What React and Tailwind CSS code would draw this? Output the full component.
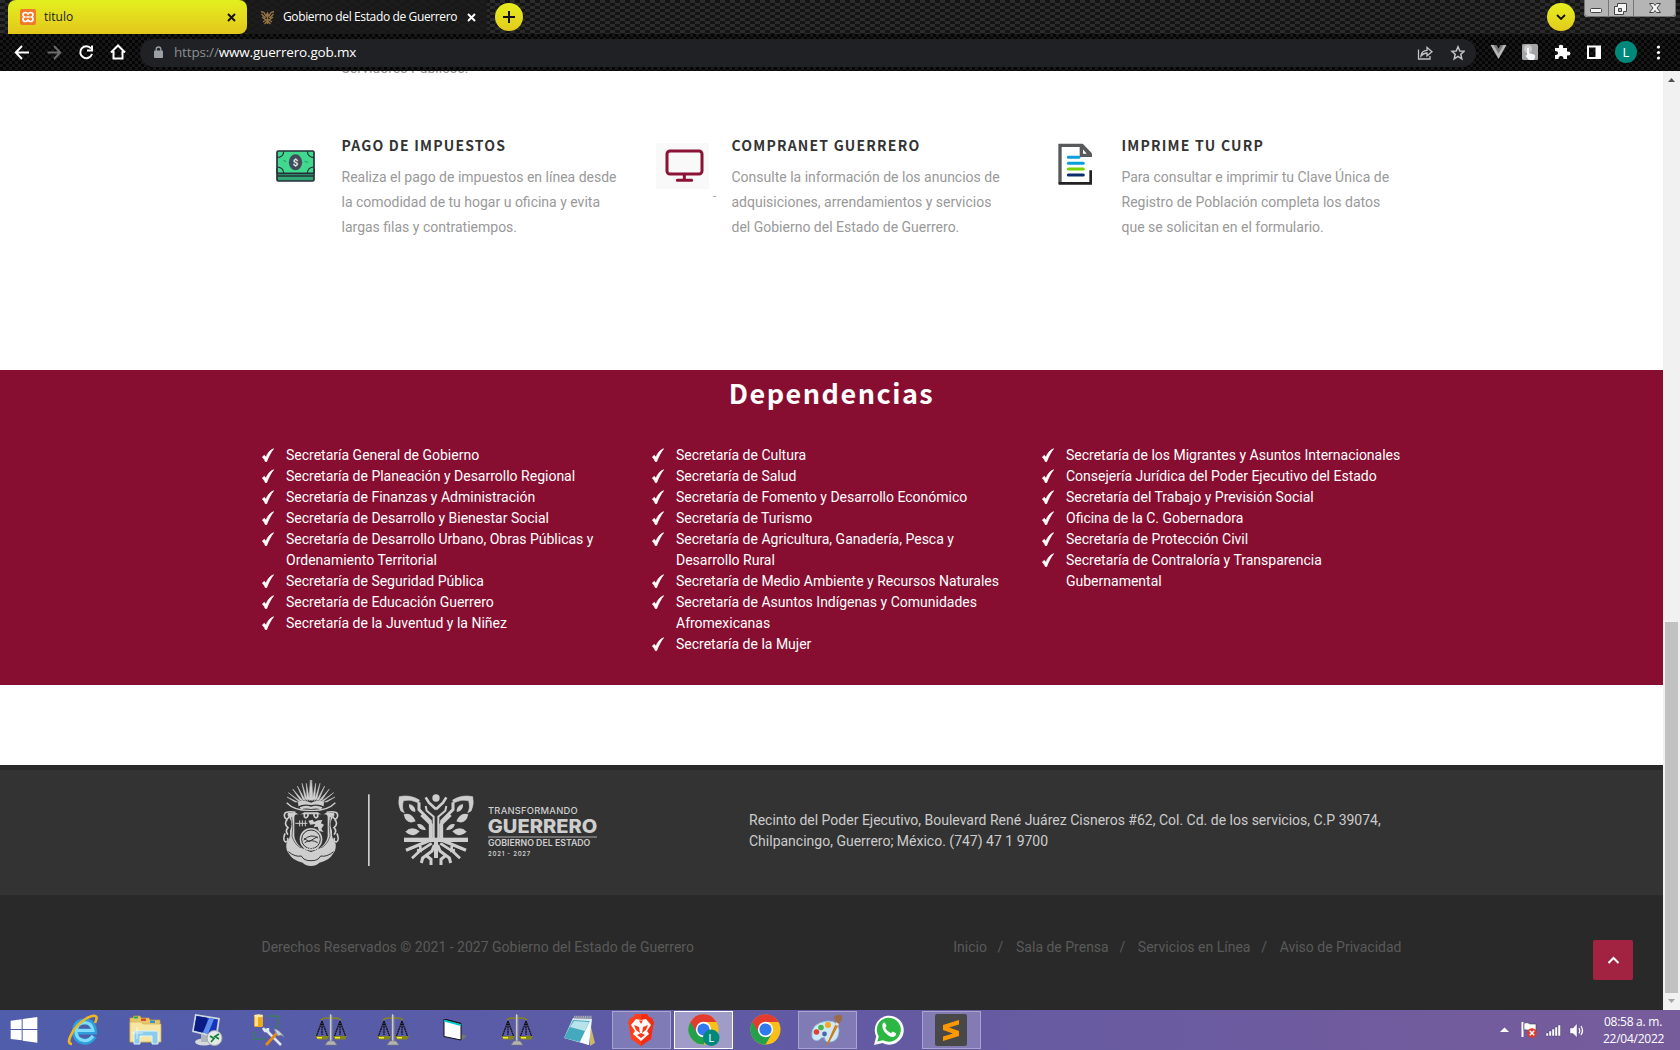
import React from "react";

const carbon =
  "bg-[#1c1c1c] bg-[repeating-conic-gradient(#141414_0_25%,#2b2b2b_0_50%)] bg-[length:10px_6px]";
const carbonFine =
  "bg-[#0c0c0c] bg-[repeating-conic-gradient(#050505_0_25%,#171717_0_50%)] bg-[length:6px_6px]";

function Close({ color }) {
  return (
    <svg className="h-[9px] w-[9px] shrink-0" viewBox="0 0 9 9">
      <path d="M1 1L8 8M8 1L1 8" stroke={color} strokeWidth="1.9" />
    </svg>
  );
}

function Butterfly() {
  return (
    <>
      <path d="M418 110Q450 103 478 120L475 128Q450 116 430 122Q424 145 433 158L423 153Q413 134 418 110Z" strokeWidth="2" stroke="currentColor" />
      <path d="M448 134Q464 136 465 154Q449 153 448 134Z" strokeWidth="3" stroke="currentColor" />
      <path d="M431 163Q455 155 467 184Q438 196 431 163Z" />
      <path d="M436 215Q456 195 479 214Q458 237 436 215Z" />
      <path d="M471 193Q487 188 498 209Q478 213 471 193Z" />
      <path d="M477 127V149L511 183V238" fill="none" stroke="currentColor" strokeWidth="9" />
      <path d="M484 165L514 194V238" fill="none" stroke="currentColor" strokeWidth="9" />
      <path d="M497 112L507 128L528 148" fill="none" stroke="currentColor" strokeWidth="8" />
      <path d="M497 138L500 152L521 170V240" fill="none" stroke="currentColor" strokeWidth="6" />
      <path d="M432 233H528V246H432Z" />
      <path d="M522 240H528V294H522Z" />
      <path d="M438 271L476 255L514 239" fill="none" stroke="currentColor" strokeWidth="10" />
      <path d="M456 295L477 275L515 250M471 270L486 273M481 258V273" fill="none" stroke="currentColor" strokeWidth="8" />
      <path d="M484 309L488 294L516 273L523 255M497 285L513 298V315" fill="none" stroke="currentColor" strokeWidth="9" />
    </>
  );
}

function CrestHalf() {
  return (
    <>
      <path d="M151 60L156 120H147ZM139 70L149 121L141 117ZM126 70L143 122L135 116ZM112 78L137 122L129 119ZM98 87L130 123L120 120ZM85 98L125 126L116 124ZM81 111L113 126L105 126Z" stroke="currentColor" strokeWidth="1.5" />
      <path d="M114 125Q133 118 153 128V135Q130 130 115 139ZM119 142Q135 134 153 140V147Q131 143 124 150Z" />
      <path d="M80 128Q104 153 153 151" fill="none" stroke="currentColor" strokeWidth="4" />
      <path d="M106 157Q90 153 76 158Q68 169 80 178Q93 169 83 163M82 178Q70 191 84 203Q74 213 84 224M75 220Q67 241 77 246Q88 244 82 234" fill="none" stroke="currentColor" strokeWidth="5" />
      <path d="M83 158H108Q119 168 133 157H153V163H112Q103 164 103 171V229Q108 262 153 276V318Q135 317 128 308Q98 302 88 283Q77 270 79 251Q92 235 90 213Q100 190 88 173Z" />
      <path d="M85 275Q106 292 124 288Q132 303 153 302" fill="none" stroke="#333" strokeWidth="3" />
      <path d="M95 171Q101 200 96 229Q105 259 131 267" fill="none" stroke="#333" strokeWidth="2" />
      <path d="M133 158V170Q139 178 144 167V161" fill="none" stroke="currentColor" strokeWidth="5" />
    </>
  );
}

function FooterLogo() {
  return (
    <svg className="-ml-[1.5px] h-[100px] w-[380px] text-[#cecece]" viewBox="0 30 1140 300" fill="currentColor">
      <CrestHalf />
      <g transform="translate(306 0) scale(-1 1)">
        <CrestHalf />
      </g>
      <circle cx="153" cy="238" r="34" />
      <circle cx="153" cy="238" r="28" fill="none" stroke="#333" strokeWidth="3" />
      <path d="M131 240Q153 219 174 234M132 235L147 245L172 230M134 248Q153 236 173 248" fill="none" stroke="#333" strokeWidth="3" />
      <path d="M106 190H142M119 181V199M127 181V199M136 181V199" stroke="currentColor" strokeWidth="3" />
      <path d="M145 182L158 179L162 186L174 181L187 180L183 190L192 194L184 207L191 216L177 213L173 200L161 202L166 192L151 194Z" />
      <path d="M123 268L184 268" stroke="currentColor" strokeWidth="6" strokeDasharray="5 3" />
      <rect x="324" y="103" width="5" height="215" />
      <circle cx="528" cy="114" r="11" />
      <Butterfly />
      <g transform="translate(1056 0) scale(-1 1)">
        <Butterfly />
      </g>
      <text x="684" y="161" fontFamily="Inter, sans-serif" fontSize="28" fontWeight="500" textLength="269">TRANSFORMANDO</text>
      <text x="683" y="219" fontFamily="Inter, sans-serif" fontSize="56" fontWeight="800" textLength="329" lengthAdjust="spacingAndGlyphs">GUERRERO</text>
      <rect x="684" y="229" width="327" height="4" fill="#8e8e8e" />
      <text x="684" y="259" fontFamily="Inter, sans-serif" fontSize="25" fontWeight="600" textLength="307" lengthAdjust="spacingAndGlyphs">GOBIERNO DEL ESTADO</text>
      <text x="684" y="289" fontFamily="Inter, sans-serif" fontSize="18" fontWeight="600" textLength="127">2021 - 2027</text>
    </svg>
  );
}

function Money() {
  return (
    <svg className="mt-[17px] ml-[14.5px] h-[32px] w-[39px]" viewBox="0 0 117 96">
      <rect x="3" y="55" width="111" height="38" rx="5" fill="#2fa673" stroke="#262f3a" strokeWidth="5" />
      <path d="M3 78H114" stroke="#262f3a" strokeWidth="5" />
      <rect x="3" y="3" width="111" height="67" rx="4" fill="#40d98e" stroke="#262f3a" strokeWidth="5" />
      <path d="M3 23Q23 22 23 4M94 4Q95 22 114 23M3 51Q22 52 23 69M114 51Q95 52 94 69" fill="none" stroke="#262f3a" strokeWidth="3.5" />
      <path d="M22 33Q27 30 29 36M86 33Q92 38 96 35" fill="none" stroke="#2fa673" strokeWidth="4" />
      <ellipse cx="58.500" cy="37" rx="20" ry="24" fill="#414b5a" />
      <text x="58.500" y="47" textAnchor="middle" fontFamily="Roboto, sans-serif" fontWeight="700" fontSize="29" fill="#eee">$</text>
    </svg>
  );
}

function Monitor() {
  return (
    <div className="mt-[10px] ml-[4.500px] w-[61px]">
      <div className="h-[46px] w-[53px] bg-[#f9f9f9]">
        <svg className="h-[46px] w-[53px]" viewBox="0 0 159 138">
          <rect x="33" y="24" width="105" height="69" rx="9" fill="none" stroke="#8a1336" strokeWidth="9" />
          <path d="M85 94V110M64 112H107" stroke="#8a1336" strokeWidth="9" strokeLinecap="round" />
        </svg>
      </div>
      <div className="mt-[7px] mr-[1px] ml-auto h-px w-[3px] bg-[#aaa]" />
    </div>
  );
}

function Doc() {
  return (
    <svg className="mt-[10px] ml-[16.500px] h-[43px] w-[35px]" viewBox="0 0 105 129">
      <path d="M6 122V7H72L98 34" fill="none" stroke="#58595b" strokeWidth="10" />
      <path d="M65 4H74L102 33V42H65ZM75 19V32H86Z" fill="#58595b" fillRule="evenodd" />
      <path d="M2 121H98V82" fill="none" stroke="#222" strokeWidth="8" />
      <g strokeWidth="9" strokeLinecap="round">
        <path d="M31 43H63M31 61H76" stroke="#0a9fdb" />
        <path d="M31 78H76" stroke="#79d400" />
        <path d="M31 96H76" stroke="#0b2d6d" />
      </g>
    </svg>
  );
}

const services = [
  {
    icon: <Money />,
    title: "PAGO DE IMPUESTOS",
    lines: ["Realiza el pago de impuestos en línea desde", "la comodidad de tu hogar u oficina y evita", "largas filas y contratiempos."],
  },
  {
    icon: <Monitor />,
    title: "COMPRANET GUERRERO",
    lines: ["Consulte la información de los anuncios de", "adquisiciones, arrendamientos y servicios", "del Gobierno del Estado de Guerrero."],
  },
  {
    icon: <Doc />,
    title: "IMPRIME TU CURP",
    lines: ["Para consultar e imprimir tu Clave Única de", "Registro de Población completa los datos", "que se solicitan en el formulario."],
  },
];

const departments = [
  [
    ["Secretaría General de Gobierno"],
    ["Secretaría de Planeación y Desarrollo Regional"],
    ["Secretaría de Finanzas y Administración"],
    ["Secretaría de Desarrollo y Bienestar Social"],
    ["Secretaría de Desarrollo Urbano, Obras Públicas y", "Ordenamiento Territorial"],
    ["Secretaría de Seguridad Pública"],
    ["Secretaría de Educación Guerrero"],
    ["Secretaría de la Juventud y la Niñez"],
  ],
  [
    ["Secretaría de Cultura"],
    ["Secretaría de Salud"],
    ["Secretaría de Fomento y Desarrollo Económico"],
    ["Secretaría de Turismo"],
    ["Secretaría de Agricultura, Ganadería, Pesca y", "Desarrollo Rural"],
    ["Secretaría de Medio Ambiente y Recursos Naturales"],
    ["Secretaría de Asuntos Indígenas y Comunidades", "Afromexicanas"],
    ["Secretaría de la Mujer"],
  ],
  [
    ["Secretaría de los Migrantes y Asuntos Internacionales"],
    ["Consejería Jurídica del Poder Ejecutivo del Estado"],
    ["Secretaría del Trabajo y Previsión Social"],
    ["Oficina de la C. Gobernadora"],
    ["Secretaría de Protección Civil"],
    ["Secretaría de Contraloría y Transparencia", "Gubernamental"],
  ],
];

function TabStrip() {
  return (
    <div className={`flex h-[34px] ${carbon}`}>
      <div className="ml-2 flex h-[34px] w-[239px] items-center rounded-t-lg rounded-br-lg bg-linear-to-b from-[#e3f01f] to-[#e3c61c] pr-[11px] pl-3 text-[#222]">
        <svg className="h-4 w-4 shrink-0" viewBox="0 0 16 16">
          <rect width="16" height="16" rx="2" fill="#f07a2c" />
          <path d="M8 5Q7 3.500 5.500 3.500Q3 3.500 3 6Q3 7.500 4.500 8Q3 8.500 3 10Q3 12.500 5.500 12.500Q7 12.500 8 11Q9 12.500 10.500 12.500Q13 12.500 13 10Q13 8.500 11.500 8Q13 7.500 13 6Q13 3.500 10.500 3.500Q9 3.500 8 5ZM6.500 8H9.500" fill="none" stroke="#fff" strokeWidth="1.700" />
        </svg>
        <span className="ml-2 flex-1 text-[12px]">titulo</span>
        <Close color="#111" />
      </div>
      <div className="flex h-[34px] w-[240px] items-center bg-[#191919]/80 pr-[11px] pl-[13px] text-white">
        <svg className="h-[15px] w-[15px] shrink-0" viewBox="0 0 15 15" fill="none" stroke="#967344" strokeWidth="1.400">
          <path d="M1 1.500L4 2.500L6 6L7.500 3L9 6L11 2.500L14 1.500M1.500 4L5.500 8M13.500 4L9.500 8M2 7L6 10H9L13 7M7.500 4V14M3 12L7.500 9L12 12M4.500 14L7.500 11L10.500 14" />
        </svg>
        <span className="ml-2 flex-1 text-[12px] tracking-[-0.37px] whitespace-nowrap">Gobierno del Estado de Guerrero</span>
        <Close color="#fff" />
      </div>
      <div className="mt-[3px] ml-2 flex h-7 w-7 items-center justify-center rounded-full bg-linear-to-b from-[#e6ee1f] to-[#e2cb1c]">
        <svg className="h-3 w-3" viewBox="0 0 12 12">
          <path d="M6 0V12M0 6H12" stroke="#111" strokeWidth="2" />
        </svg>
      </div>
      <div className="flex-1" />
      <div className="mt-[3px] mr-[9px] flex h-7 w-7 items-center justify-center rounded-full bg-linear-to-b from-[#e6ee1f] to-[#e2cb1c]">
        <svg className="h-[6px] w-[10px]" viewBox="0 0 10 6">
          <path d="M1 1L5 5L9 1" fill="none" stroke="#111" strokeWidth="1.800" />
        </svg>
      </div>
      <svg className="mr-1 h-[17px] w-[92px]" viewBox="0 0 92 17">
        <path d="M0 0H92V14Q92 17 89 17H3Q0 17 0 14Z" fill="#b5b5b5" />
        <path d="M0.500 0V13Q0.500 16.500 4 16.500H88Q91.500 16.500 91.500 13V0M24.500 0V16M49.500 0V16" fill="none" stroke="#777" />
        <g fill="#f5f5f5" stroke="#444">
          <rect x="6.500" y="8.500" width="11" height="4" rx="1" />
          <path d="M33.500 3.500H42.500V11.500H39.500V14.500H30.500V6.500H33.500ZM34.500 8.500V11.500H37.500V8.500Z" fillRule="evenodd" />
          <path d="M65.500 3.500H69.500L71 5.500L72.500 3.500H76.500L73 8L76.500 12.500H72.500L71 10.500L69.500 12.500H65.500L69 8Z" />
        </g>
      </svg>
    </div>
  );
}

function Toolbar() {
  return (
    <div className={`flex h-[37px] items-center ${carbonFine}`}>
      <svg className="h-[37px] w-[140px] shrink-0" viewBox="0 0 140 37" fill="none" stroke="#fff" strokeWidth="2">
        <path d="M29 18.500H16.500M22 12L15.800 18.500L22 25" />
        <path d="M47.500 18.500H60M54 12L60.200 18.500L54 25" stroke="#6d6d6d" />
        <path d="M91 14.500A6 6 0 1 0 92 20M92 11.500V16.500H87" />
        <path d="M111 18.500L118 11.500L125 18.500M113.500 17V24.500H122.500V17" />
      </svg>
      <div className="flex h-7 w-[1336px] items-center rounded-full bg-[#202124] pr-[11px] pl-[14px]">
        <svg className="h-[13px] w-[9px]" viewBox="0 0 9 13">
          <rect y="4.500" width="9" height="7.500" rx="1" fill="#9aa0a6" />
          <path d="M2.200 5V3.200Q2.200 1 4.500 1Q6.800 1 6.800 3.200V5" fill="none" stroke="#9aa0a6" strokeWidth="1.300" />
        </svg>
        <div className="ml-[11px] flex-1 text-[13.500px] tracking-[-0.17px] text-white">
          <span className="text-[#8b8f93]">https://</span>www.guerrero.gob.mx
        </div>
        <svg className="h-[16px] w-[48px]" viewBox="0 0 48 16" fill="none" stroke="#c0c3c7" strokeWidth="1.300">
          <path d="M1.500 4.500V14H13V11M4 11Q4.500 5.500 10 5.300V2.500L15 6.700L10 10.800V8Q6.500 8 4 11Z" />
          <path d="M41 1.800L42.800 6L47 6.300L43.800 9.200L44.800 13.800L41 11.400L37.200 13.800L38.200 9.200L35 6.300L39.200 6Z" strokeWidth="1.500" />
        </svg>
      </div>
      <svg className="h-[37px] flex-1" viewBox="1476 34 204 37">
        <path d="M1490.500 45H1495L1498.500 51.200L1502 45H1506.500L1498.500 59Z" fill="#b8b8b8" />
        <path d="M1493.500 45H1496.500L1498.500 48.500L1500.500 45H1503.500L1498.500 53.500Z" fill="#777" />
        <rect x="1522" y="44" width="16" height="16" rx="1.500" fill="#a5a5a5" />
        <circle cx="1528" cy="49" r="4" fill="#c9c9c9" />
        <path d="M1527 48Q1528 47 1529 48V53L1534 54.500Q1535.500 55 1535 57L1534 60H1529L1525.500 56L1526 55L1527 55.500Z" fill="#f5f8fa" />
        <path d="M1555 48H1559Q1558 44.700 1561 44.700Q1563.800 44.700 1563 48H1567V51.500Q1570.500 51 1570.500 53.500Q1570.500 56 1567 55.500V59H1563.500Q1563.500 56 1561 56Q1558.500 56 1558.500 59H1555V55Q1558 55 1558 53Q1558 51 1555 51Z" fill="#fff" />
        <rect x="1588" y="46.500" width="12" height="11.500" fill="none" stroke="#fff" strokeWidth="2" />
        <rect x="1595.500" y="46" width="5" height="12" fill="#fff" />
        <circle cx="1626" cy="52" r="11" fill="#00897b" />
        <text x="1626" y="56.500" textAnchor="middle" fontFamily="Roboto, sans-serif" fontSize="12" fill="#fff">L</text>
        <g fill="#fff">
          <circle cx="1658.500" cy="47" r="1.600" />
          <circle cx="1658.500" cy="52.500" r="1.600" />
          <circle cx="1658.500" cy="58" r="1.600" />
        </g>
      </svg>
    </div>
  );
}

function Scrollbar() {
  return (
    <div className="flex w-[17px] flex-col items-center bg-[#f1f1f1]">
      <svg className="h-[17px] w-[17px]" viewBox="0 0 17 17">
        <path d="M5 11L8.500 7L12 11Z" fill="#505050" />
      </svg>
      <div className="mt-[534px] h-[371px] w-[13px] bg-[#c1c1c1]" />
      <svg className="h-[17px] w-[17px]" viewBox="0 0 17 17">
        <path d="M5 6L8.500 10L12 6Z" fill="#a3a3a3" />
      </svg>
    </div>
  );
}

function Page() {
  return (
    <div className="flex h-[939px]">
      <main className="relative w-[1663px] overflow-hidden bg-white font-[Roboto,sans-serif] text-[14px]">
        <section className="flow-root h-[299px]">
          <div className="mx-auto flow-root w-[1140px]">
            <p className="-mt-[15px] ml-20 block h-[25px] leading-[25px] text-[#999]">Servidores Públicos.</p>
            <div className="mt-[51px] grid w-[1170px] grid-cols-3">
              {services.map((s) => (
                <article key={s.title} className="flex pt-[1px]">
                  <div className="w-20 shrink-0">{s.icon}</div>
                  <div className="whitespace-nowrap">
                    <h3 className="h-[32px] font-['Noto_Sans_CJK_SC',sans-serif] text-[14px] leading-[24px] font-bold tracking-[1.200px] text-[#333]">{s.title}</h3>
                    <p className="leading-[25px] text-[#999]">
                      {s.lines.map((l) => (
                        <span key={l} className="block">{l}</span>
                      ))}
                    </p>
                  </div>
                </article>
              ))}
            </div>
          </div>
        </section>
        <section className="h-[315px] bg-[#880e31] text-white">
          <h2 className="pt-[3px] text-center font-['Noto_Sans_CJK_SC',sans-serif] text-[27px] leading-[40px] font-bold tracking-[1.500px]">Dependencias</h2>
          <div className="mx-auto mt-[32px] w-[1140px]">
            <div className="grid w-[1170px] grid-cols-3">
              {departments.map((col, i) => (
                <ul key={i} className="leading-[21px] whitespace-nowrap">
                  {col.map((item) => (
                    <li key={item[0]} className="flex">
                      <svg className="mt-[3px] mr-[12px] ml-[0.5px] h-[14px] w-[12px] shrink-0" viewBox="38 55 36 42">
                        <path d="M39 82L45 77L50 83C54 72 61 61 73 57C64 68 57 82 52 96H48C46 90 43 86 39 82Z" fill="#fff" stroke="#fff" strokeWidth="2" />
                      </svg>
                      <div>
                        {item.map((l) => (
                          <span key={l} className="block">{l}</span>
                        ))}
                      </div>
                    </li>
                  ))}
                </ul>
              ))}
            </div>
          </div>
        </section>
        <div className="h-20" />
        <footer className="border-t-[5px] border-[#282828] bg-[#333]">
          <div className="mx-auto flex h-[125px] w-[1140px]">
            <FooterLogo />
            <p className="mt-[40px] ml-[109px] leading-[21px] whitespace-nowrap text-[#ccc]">
              Recinto del Poder Ejecutivo, Boulevard René Juárez Cisneros #62, Col. Cd. de los servicios, C.P 39074,
              <br />
              Chilpancingo, Guerrero; México. (747) 47 1 9700
            </p>
          </div>
          <div className="h-[115px] bg-[#292929] text-[#5a5a5a]">
            <div className="mx-auto flex h-[104px] w-[1140px] items-center justify-between">
              <span>Derechos Reservados © 2021 - 2027 Gobierno del Estado de Guerrero</span>
              <nav className="flex">
                <span>Inicio</span>
                <span className="mx-[10.700px]">/</span>
                <span className="ml-[2px]">Sala de Prensa</span>
                <span className="mx-[10.700px]">/</span>
                <span className="ml-[2px]">Servicios en Línea</span>
                <span className="mx-[10.700px]">/</span>
                <span className="ml-[2px]">Aviso de Privacidad</span>
              </nav>
            </div>
          </div>
        </footer>
        <button className="absolute right-[30px] bottom-[30px] flex h-10 w-10 items-center justify-center rounded-[2px] bg-[#a12341]">
          <svg className="h-[8px] w-[13px]" viewBox="0 0 13 8">
            <path d="M1.500 7L6.500 2L11.500 7" fill="none" stroke="#fff" strokeWidth="2" />
          </svg>
        </button>
      </main>
      <Scrollbar />
    </div>
  );
}

function Windows() {
  return (
    <svg className="h-[26px] w-[28px]" viewBox="0 0 84 78" fill="#fff">
      <path d="M2 11L35 7V36H2ZM38 6L82 0V36H38ZM2 39H35V70L2 66ZM38 39H82V77L38 71Z" />
    </svg>
  );
}

function Explorer() {
  return (
    <svg className="h-[32px] w-[32px]" viewBox="0 0 32 32" fill="none">
      <path d="M27 22Q23 28.500 16.500 27.500Q8 26 8 17.500Q8.500 8 17.500 7.500Q26.500 8 27 17.500H9" stroke="#2f9fdc" strokeWidth="6" />
      <path d="M26 22Q22 27.500 16.500 26.500Q9 25 9 17.500Q9.500 9 17.500 8.500Q25 9 26 16.500H10" stroke="#7fdcfa" strokeWidth="3" />
      <path d="M5 30Q0 30 3.500 22Q8 11 20 4Q28 0 29.500 3Q30 5 28 9" stroke="#efb81f" strokeWidth="2.600" />
    </svg>
  );
}

function Folder() {
  return (
    <svg className="h-[30px] w-[33px]" viewBox="0 0 33 30">
      <path d="M1 3H4L5 1H11L12 3H20L21 5H31V27H1Z" fill="#e8c769" stroke="#c79d3c" strokeWidth=".7" />
      <path d="M5 1.500H9V3.500H5Z" fill="#26ae4b" />
      <path d="M12 3.500H17V6H12Z" fill="#d94a32" />
      <path d="M21 5.500H26V8H21Z" fill="#3590d4" />
      <path d="M1 7H12L14 9H32V27H1Z" fill="#f7e6a1" stroke="#d0ae57" strokeWidth=".7" />
      <path d="M5 29V18Q5 16 7 16H27Q29 16 29 18V29H23V21H11V29Z" fill="#8accea" stroke="#e0f5fd" />
      <path d="M8 12V24M3 18H14" stroke="#fff" opacity=".7" />
    </svg>
  );
}

function Remote() {
  return (
    <svg className="h-[32px] w-[32px]" viewBox="0 0 32 32">
      <ellipse cx="13" cy="28" rx="9" ry="3.500" fill="#d5d9dc" />
      <path d="M10 20H16L17 28H10Z" fill="#aeb6bb" />
      <path d="M4 0L29 4L26 24L1 18Z" fill="#cdd7de" />
      <path d="M5.500 2L27 5.500L24.500 21.500L3 16.500Z" fill="#1634bb" />
      <path d="M5.500 2L16 3.700Q18 11 11 18.500L3 16.500Z" fill="#0a1c84" />
      <path d="M18 4L23 5L17 20L12 18.500Z" fill="#5f8dee" />
      <circle cx="23.500" cy="24" r="7.500" fill="#e7e9e9" stroke="#a2a7aa" />
      <path d="M19 22L23 24.500L20 28M28 20L24 22.500L28 25" fill="none" stroke="#15843b" strokeWidth="1.800" />
    </svg>
  );
}

function Tools() {
  return (
    <svg className="h-[32px] w-[32px]" viewBox="0 0 32 32">
      <path d="M15.500 2H25V13H22M1 18V25H12" fill="none" stroke="#27942b" strokeWidth="1.500" strokeDasharray="1.800 1.400" />
      <rect x="1" y="1" width="9" height="12" rx="1.500" fill="#f0a91c" />
      <rect x="2" y="1" width="3" height="11" fill="#ffe391" />
      <ellipse cx="5.500" cy="1.800" rx="4.500" ry="1.500" fill="#ffeaa8" />
      <path d="M12 15L28 31" stroke="#dfe7ee" strokeWidth="2.500" />
      <path d="M10 14L12 17L15 17L15 14" fill="none" stroke="#dfe7ee" strokeWidth="2.500" />
      <path d="M24 19L13 31" stroke="#e58a17" strokeWidth="2.800" />
      <path d="M21 15Q26 15 31 23L28 21L25 22Z" fill="#c5cfd8" stroke="#7d8893" strokeWidth=".6" />
    </svg>
  );
}

function Scales() {
  return (
    <svg className="h-[32px] w-[32px]" viewBox="0 0 32 32">
      <path d="M7 7L1.500 22M7 7L12.500 22M7 7V21M25 7L19.500 22M25 7L30.500 22M25 7V21" stroke="#111" strokeWidth="1.300" strokeDasharray="2 .5" />
      <path d="M6 6Q9 3 16 4.500Q23 3 26 6" fill="none" stroke="#85851b" strokeWidth="1.700" />
      <path d="M0 22H14L12 25.500H3ZM18 22H32L30 25.500H20Z" fill="#85851b" />
      <path d="M2 23.800H7M20 23.800H25" stroke="#f6f02e" strokeWidth="1.500" />
      <path d="M16 1V28" stroke="#9b9b9b" strokeWidth="2.600" />
      <path d="M15.500 0V28" stroke="#d5d5d5" strokeWidth=".8" />
      <path d="M13 27H19L22 31H10Z" fill="#b4b4b4" stroke="#777" strokeWidth=".6" />
    </svg>
  );
}

function WindowIcon() {
  return (
    <svg className="h-[22px] w-[25px]" viewBox="0 0 25 22">
      <path d="M17 15L24 17L19 21H17Z" fill="#777" />
      <path d="M1 0L18 4.500V21L1 17.500Z" fill="#fff" stroke="#111" />
      <path d="M1 1.500L18 6" stroke="#00c7cc" strokeWidth="2.200" />
      <path d="M1 0L18 4.500" stroke="#111" />
    </svg>
  );
}

function Notepad() {
  return (
    <svg className="h-[31px] w-[32px]" viewBox="0 0 32 31">
      <path d="M27 8L32 28L27 31Z" fill="#cbb56a" />
      <path d="M10 3L29 4L26 30L1 23Z" fill="#e7f4f6" />
      <path d="M10 5L27 6L17 27L1 23Z" fill="#45a9bd" />
      <path d="M11 6L26 7L22 16L7 12Z" fill="#b9e3ec" />
      <path d="M27 6L26 30L17 27Z" fill="#f8fbfb" />
      <path d="M11 2.500H29" stroke="#a5aab0" strokeWidth="3.500" strokeDasharray="1.300 .5" />
    </svg>
  );
}

function Brave() {
  return (
    <svg className="h-[32px] w-[28px]" viewBox="0 0 28 32">
      <path d="M8 0H20L22 3L25 4L27 9L26 12L24 25L14 32L4 25L2 12L1 9L3 4L6 3Z" fill="#fb411b" />
      <path d="M14 0H20L22 3L25 4L27 9L26 12L24 25L14 32Z" fill="#f22d13" />
      <path d="M9 5L14 6L19 5L24 11L20 17L22 20L14 27L6 20L8 17L4 11Z" fill="#fff" />
      <path d="M7 11L12 13L13 19L9 16ZM21 11L16 13L15 19L19 16ZM10 21L14 19L18 21L14 24ZM12 6.500H16L14 10Z" fill="#fb391a" />
    </svg>
  );
}

function Chrome({ badge }) {
  return (
    <svg className="h-[32px] w-[31px] overflow-visible" viewBox="0 0 32 33">
      <circle cx="16" cy="16" r="15.500" fill="#fbc018" />
      <path d="M16 16L2.500 8.200A15.500 15.500 0 0 0 16 31.500L22.700 20Z" fill="#23a04b" />
      <path d="M2.500 8.200A15.500 15.500 0 0 1 29.500 8.300H16L9.500 20Z" fill="#e33b2e" />
      <circle cx="16" cy="16" r="7.900" fill="#fff" />
      <circle cx="16" cy="16" r="6.300" fill="#3079ee" />
      {badge && (
        <g>
          <circle cx="24" cy="24.500" r="8.500" fill="#00897b" />
          <text x="24" y="29" textAnchor="middle" fontFamily="Roboto, sans-serif" fontSize="11" fill="#fff">L</text>
        </g>
      )}
    </svg>
  );
}

function Paint() {
  return (
    <svg className="h-[32px] w-[32px]" viewBox="0 0 32 32">
      <path d="M17 7Q28 7 28 17Q27 29 17 28Q13 27 14 24Q11 22 8 26Q3 28 1 23Q-1 9 17 7Z" fill="#cfe9f5" stroke="#90bfd7" strokeWidth=".8" />
      <circle cx="17" cy="11" r="3" fill="#f5a623" />
      <circle cx="10" cy="13.500" r="2.800" fill="#47b649" />
      <circle cx="5.500" cy="18" r="2.800" fill="#dc4133" />
      <circle cx="13.500" cy="20" r="2.400" fill="#4d65ae" />
      <path d="M26 8L16 31L20 24L28 9Z" fill="#ed9d31" stroke="#c97a1b" strokeWidth="1.200" />
      <path d="M25 9L23 3Q28 -1 31 2Q32 5 28 10Z" fill="#9a6b44" />
      <path d="M25 8L28 10L27 12L24 11Z" fill="#ddd" />
    </svg>
  );
}

function WhatsApp() {
  return (
    <svg className="h-[30px] w-[30px]" viewBox="0 0 30 30">
      <path d="M0 30L2.200 21.500A14.500 14.500 0 1 1 8.500 28Z" fill="#fff" />
      <path d="M3.300 26.500L4.800 21.300A12 12 0 1 1 9 25.200Z" fill="#2cb742" />
      <path d="M8.500 9Q9.500 7 11 7.800L12.500 11L11.200 13Q13.500 17 17 18.200L18.700 16.500L22 18.200Q22.300 20.800 19.500 22Q16 22.800 11.500 18Q7.500 13.500 8.500 9Z" fill="#fff" />
    </svg>
  );
}

function Sublime() {
  return (
    <svg className="h-[32px] w-[32px]" viewBox="0 0 32 32">
      <rect width="32" height="32" rx="2" fill="#484848" />
      <path d="M24 6L8 11V16L18 19.500L8 22.500V27L24 22V17L14 13.500L24 10.500Z" fill="#ff9800" />
    </svg>
  );
}

const tasks = [
  { icon: <Explorer /> },
  { icon: <Folder /> },
  { icon: <Remote /> },
  { icon: <Tools /> },
  { icon: <Scales /> },
  { icon: <Scales /> },
  { icon: <WindowIcon /> },
  { icon: <Scales /> },
  { icon: <Notepad /> },
  { icon: <Brave />, box: "border border-[#aaa3ce] bg-white/20" },
  { icon: <Chrome badge />, box: "border border-white bg-white/40" },
  { icon: <Chrome /> },
  { icon: <Paint />, box: "border border-[#aaa3ce] bg-white/20" },
  { icon: <WhatsApp /> },
  { icon: <Sublime />, box: "border border-[#aaa3ce] bg-white/20" },
];

function Taskbar() {
  return (
    <div className="flex h-10 items-center bg-linear-to-r from-[#4f5dab] via-[#625aa3] to-[#775c9b] text-white">
      <div className="ml-[10px] w-[42px]">
        <Windows />
      </div>
      {tasks.map((t, i) => (
        <div key={i} className="flex h-[38px] w-[62px] shrink-0 justify-center">
          <div className={`flex w-[59px] items-center justify-center ${t.box || ""}`}>{t.icon}</div>
        </div>
      ))}
      <div className="flex-1" />
      <svg className="mr-[17px] h-[20px] w-[88px]" viewBox="1498 1021 88 20">
        <path d="M1500 1033L1504.500 1028.500L1509 1033Z" fill="#fff" />
        <path d="M1522.500 1023V1038" stroke="#fff" strokeWidth="2" />
        <path d="M1524 1024Q1528 1023 1530 1025H1536V1032H1529Q1527 1030 1524 1031Z" fill="#fff" stroke="#443a66" strokeWidth=".6" />
        <circle cx="1532" cy="1034" r="4.800" fill="#dc3b2e" />
        <path d="M1529.800 1031.800L1534.200 1036.200M1534.200 1031.800L1529.800 1036.200" stroke="#fff" strokeWidth="1.500" />
        <g fill="#fff" stroke="#443a66" strokeWidth=".4">
          <path d="M1546 1034H1548.500V1037H1546ZM1549 1032H1551.500V1037H1549ZM1552 1030H1554.500V1037H1552ZM1555 1028H1557.500V1037H1555ZM1558 1026H1560.500V1037H1558Z" />
          <path d="M1570 1029H1573L1577 1024.500V1038.500L1573 1034.500H1570Z" />
        </g>
        <path d="M1579 1029Q1580.500 1031.500 1579 1034.500M1581 1027Q1584 1031.500 1581 1036" fill="none" stroke="#fff" strokeWidth="1.200" />
      </svg>
      <div className="mr-[17px] w-[60px] text-center text-[12px] leading-[17px] tracking-[-0.25px] whitespace-nowrap">
        08:58 a. m.
        <br />
        22/04/2022
      </div>
    </div>
  );
}

export default function App() {
  return (
    <div className="h-[1050px] w-[1680px] overflow-hidden font-['Open_Sans',sans-serif]">
      <TabStrip />
      <Toolbar />
      <Page />
      <Taskbar />
    </div>
  );
}
